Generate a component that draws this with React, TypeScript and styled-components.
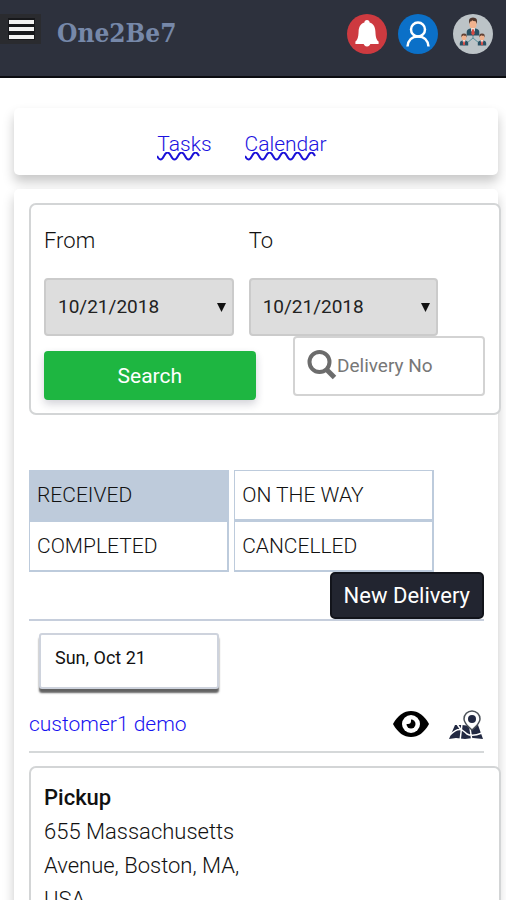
import React from "react";
import styled, { createGlobalStyle } from "styled-components";

const sans = '"Roboto", "Liberation Sans", sans-serif';

const GlobalStyle = createGlobalStyle`
  *, *::before, *::after { box-sizing: border-box; }
  body {
    margin: 0;
    background: #fff;
    color: #111;
    font: 300 22px/34px ${sans};
    overflow-x: hidden;
  }
  button, input, select { font-family: inherit; margin: 0; }
`;

const Header = styled.header`
  display: flex;
  align-items: flex-start;
  height: 78px;
  padding: 0 13px 0 0;
  background: #2d313d;
  border-bottom: 2px solid #0b0c10;
`;

const MenuButton = styled.button`
  display: flex;
  margin-top: 14px;
  padding: 4px 6px 4px 8px;
  border: 0;
  background: #2a2b2f;
`;

const Brand = styled.h1`
  flex: 1;
  margin: 15px 0 0 16px;
  color: #7688a9;
  font: 700 26px/36px "DejaVu Serif Condensed", "DejaVu Serif", serif;
`;

const Actions = styled.div`
  display: flex;
  gap: 11px;
  margin-top: 14px;
`;

const RoundButton = styled.button<{ $color: string }>`
  display: flex;
  align-items: center;
  justify-content: center;
  width: 40px;
  height: 40px;
  padding: 0;
  border: 0;
  border-radius: 50%;
  background: ${(p) => p.$color};

  &:last-child { margin-left: 4px; }
`;

const Page = styled.main`
  padding: 30px 8px 0 14px;
`;

const Nav = styled.nav`
  display: flex;
  justify-content: center;
  gap: 33px;
  padding: 19px 28px 14px 0;
  margin-bottom: 14px;
  border-radius: 5px;
  box-shadow: 0 7px 12px rgba(0, 0, 0, 0.22);
`;

const NavLink = styled.a`
  position: relative;
  color: #1c12e0;
  font-size: 21px;
  text-decoration: none;
`;

const Wave = styled.svg`
  position: absolute;
  left: 0;
  bottom: 0;
`;

const Panel = styled.section`
  padding: 14px 14px 60px 15px;
  background: #fff;
  border-radius: 5px;
  box-shadow: 0 7px 12px rgba(0, 0, 0, 0.22);
`;

const Card = styled.div`
  margin-right: -17px;
  padding: 13px;
  border: 2px solid #d3d5d6;
  border-radius: 7px;
  background: #fff;
`;

const SearchForm = styled(Card).attrs({ as: "form" })`
  padding: 19px 14px 13px 13px;
`;

const Dates = styled.div`
  display: grid;
  grid-template-columns: 43% 43%;
  gap: 15px;
`;

const Field = styled.div`
  display: flex;
  flex-direction: column;
  gap: 20px;
  position: relative;
`;

const DateSelect = styled.select`
  appearance: none;
  width: 100%;
  height: 58px;
  padding: 0 12px 2px;
  border: 2px solid #cbcbcb;
  border-radius: 4px;
  background: #ddd;
  color: #222;
  font-size: 19px;
`;

const Arrow = styled.svg`
  position: absolute;
  right: 8px;
  bottom: 24px;
  pointer-events: none;
`;

const SearchRow = styled.div`
  display: flex;
  justify-content: space-between;
  align-items: flex-start;
`;

const SearchButton = styled.button`
  width: 48%;
  height: 49px;
  margin-top: 15px;
  border: 0;
  border-radius: 4px;
  background: #1eb641;
  color: #fff;
  font-size: 21px;
  box-shadow: 0 4px 8px rgba(30, 30, 60, 0.2);
`;

const NumberBox = styled.label`
  display: flex;
  align-items: center;
  width: 192px;
  height: 60px;
  padding: 0 12px 2px;
  border: 2px solid #d3d3d3;
  border-radius: 4px;
  background: #fff;

  svg { flex: none; }
`;

const NumberInput = styled.input`
  flex: 1;
  min-width: 0;
  padding: 0;
  border: 0;
  outline: 0;
  background: transparent;
  font-size: 19px;
  &::placeholder { color: #777; opacity: 1; }
`;

const Tabs = styled.div`
  display: grid;
  grid-template-columns: 44% 44%;
  column-gap: 5px;
  margin-top: 55px;
`;

const Tab = styled.button<{ $active?: boolean }>`
  height: 51px;
  padding: 0 7px;
  border: 1px solid #bdcbdc;
  border-width: 1px 2px 2px 1px;
  background: ${(p) => (p.$active ? "#becbdb" : "#fff")};
  color: #111;
  font-size: 21px;
  font-weight: 300;
  text-align: left;
`;

const NewRow = styled.div`
  display: flex;
  justify-content: flex-end;
  border-bottom: 2px solid #c6cedc;
`;

const NewButton = styled.button`
  height: 47px;
  padding: 0 12px;
  border: 2px solid #12141b;
  border-radius: 5px;
  background: #222530;
  color: #fff;
  font-size: 22px;
`;

const DayBox = styled.div`
  width: 180px;
  margin: 12px 0 0 10px;
  padding: 6px 14px 12px;
  border: 2px solid #ced3dd;
  border-radius: 3px;
  background: #fff;
  font-size: 18px;
  font-weight: 400;
  box-shadow: 0 4px 2px #626262;
`;

const Delivery = styled.div`
  display: flex;
  align-items: center;
  margin: 11px 0 13px;
  padding: 7px 0 10px;
  border-bottom: 2px solid #d5d8d9;
`;

const Customer = styled.a`
  flex: 1;
  color: #1712f0;
  font-size: 21px;
  text-decoration: none;
`;

const IconButton = styled.button`
  display: flex;
  margin-left: 19px;
  padding: 0;
  border: 0;
  background: transparent;
`;

const Address = styled.address`
  width: 205px;
  font-style: normal;
`;

const AddressTitle = styled.strong`
  display: block;
  font-weight: 500;
`;

const Person = ({ x, y, s, hair }: { x: number; y: number; s: number; hair: string }) => (
  <g transform={`translate(${x} ${y}) scale(${s})`}>
    <path d="M-7 14v-4q0-3 4-4h6q4 1 4 4v4z" fill="#285164" />
    <path d="M-2 5h4v3L0 13l-2-5z" fill="#fff" />
    <path d="M-1 7h2l1 5-2 2-2-2z" fill="#d84b43" />
    <ellipse cx="0" cy="1" rx="4" ry="5" fill="#f1b28e" />
    <path d="M-4 1q-2-7 4-7t4 7l-1-3q-3 0-4-1-1 2-2 1z" fill={hair} />
  </g>
);

const links = [
  { href: "#tasks", label: "Tasks", crests: 3 },
  { href: "#calendar", label: "Calendar", crests: 5 },
];
const dates = [
  { id: "from", label: "From" },
  { id: "to", label: "To" },
];
const tabs = ["RECEIVED", "ON THE WAY", "COMPLETED", "CANCELLED"];

export default function App() {
  return (
    <>
      <GlobalStyle />
      <Header>
        <MenuButton aria-label="Menu">
          <svg width="27" height="22" viewBox="0 0 27 22">
            <path d="M0 0h27v22H0z" fill="#17181b" />
            <path d="M1 2h25v4H1zM1 9h25v4H1zM1 17h25v4H1z" fill="#f1f1f1" />
          </svg>
        </MenuButton>
        <Brand>One2Be7</Brand>
        <Actions>
          <RoundButton $color="#cd3a40" aria-label="Notifications">
            <svg width="24" height="28" viewBox="0 0 24 28" fill="#fff">
              <path d="M12 0c1.600 0 2.600 1 2.600 2.400 4 1.300 5.600 4.500 5.800 9 .2 6 1.200 8.600 3.200 10.200V24H.4v-2.400c2-1.600 3-4.200 3.200-10.200.2-4.500 1.800-7.700 5.800-9C9.400 1 10.400 0 12 0z" />
              <path d="M8.500 23h7c-.3 2-1.500 3.500-3.500 3.500S8.800 25 8.500 23z" />
            </svg>
          </RoundButton>
          <RoundButton $color="#0b70c8" aria-label="Account">
            <svg width="26" height="28" viewBox="0 0 26 28" fill="none" stroke="#fff" strokeWidth="2.500">
              <circle cx="13" cy="9.500" r="7" />
              <path d="M2.500 26.500c.5-6 4.500-10 10.500-10s10 4 10.500 10" />
            </svg>
          </RoundButton>
          <RoundButton $color="#bcc3c7" aria-label="Team">
            <svg width="36" height="36" viewBox="0 0 36 36">
              <path d="M18 17v5l-6 5M18 22l6 5" fill="none" stroke="#56919c" strokeWidth="1" />
              <Person x={18} y={7} s={0.9} hair="#51372d" />
              <Person x={9} y={21} s={0.6} hair="#614134" />
              <Person x={27} y={21} s={0.6} hair="#614134" />
            </svg>
          </RoundButton>
        </Actions>
      </Header>

      <Page>
        <Nav>
          {links.map((l) => (
            <NavLink key={l.href} href={l.href}>
              {l.label}
              <Wave width={l.crests * 14 + 2} height="9" aria-hidden="true">
                <path
                  d={"M0 4q3.500 7 7 0" + "t7 0".repeat(l.crests * 2 - 1)}
                  fill="none"
                  stroke="#1c12d8"
                  strokeWidth="2"
                />
              </Wave>
            </NavLink>
          ))}
        </Nav>

        <Panel>
          <SearchForm>
            <Dates>
              {dates.map((d) => (
                <Field key={d.id}>
                  <label htmlFor={d.id}>{d.label}</label>
                  <DateSelect id={d.id}>
                    <option>10/21/2018</option>
                  </DateSelect>
                  <Arrow width="9" height="9" viewBox="0 0 9 9">
                    <path d="M0 0h9L4.500 9z" fill="#111" />
                  </Arrow>
                </Field>
              ))}
            </Dates>
            <SearchRow>
              <SearchButton type="button">Search</SearchButton>
              <NumberBox>
                <svg width="30" height="32" viewBox="0 0 30 32" fill="none" stroke="#6c6c6c">
                  <circle cx="12.500" cy="13" r="10" strokeWidth="4" />
                  <path d="M19.500 20.500l8 8" strokeWidth="5" />
                </svg>
                <NumberInput aria-label="Delivery number" placeholder="Delivery No" />
              </NumberBox>
            </SearchRow>
          </SearchForm>

          <Tabs>
            {tabs.map((t, i) => (
              <Tab key={t} $active={i === 0}>{t}</Tab>
            ))}
          </Tabs>
          <NewRow>
            <NewButton>New Delivery</NewButton>
          </NewRow>

          <DayBox>Sun, Oct 21</DayBox>
          <Delivery>
            <Customer href="#customer1">customer1 demo</Customer>
            <IconButton aria-label="View delivery">
              <svg width="36" height="28" viewBox="0 0 36 28">
                <path d="M0 14C5 5 11 1 18 1s13 4 18 13c-5 9-11 13-18 13S5 23 0 14z" fill="#000" />
                <circle cx="18" cy="14" r="9" fill="#fff" />
                <circle cx="18" cy="14" r="4.500" fill="#000" />
                <path d="M13 8h5v3a3 3 0 0 1-3 3h-2z" fill="#fff" />
              </svg>
            </IconButton>
            <IconButton aria-label="Show on map">
              <svg width="36" height="34" viewBox="0 -3 36 34">
                <path d="M7 15h7l9 1 7-1 5 14-10-1-8 1-9-1-7 1z" fill="#222942" />
                <path d="M2 25q7-7 12-5 3 2 5 4 5 3 15-1M14 14l-2 17M22 18l2 13M9 14l4 6" fill="none" stroke="#fff" strokeWidth="1.500" />
                <path d="M24 20c-6-5-8-8-8-11a8 8 0 0 1 16 0c0 3-2 6-8 11z" fill="#fff" stroke="#4b5158" strokeWidth="1.500" />
                <circle cx="24" cy="9" r="4" fill="#222942" />
              </svg>
            </IconButton>
          </Delivery>

          <Card>
            <Address>
              <AddressTitle>Pickup</AddressTitle>
              655 Massachusetts Avenue, Boston, MA, USA
            </Address>
          </Card>
        </Panel>
      </Page>
    </>
  );
}
